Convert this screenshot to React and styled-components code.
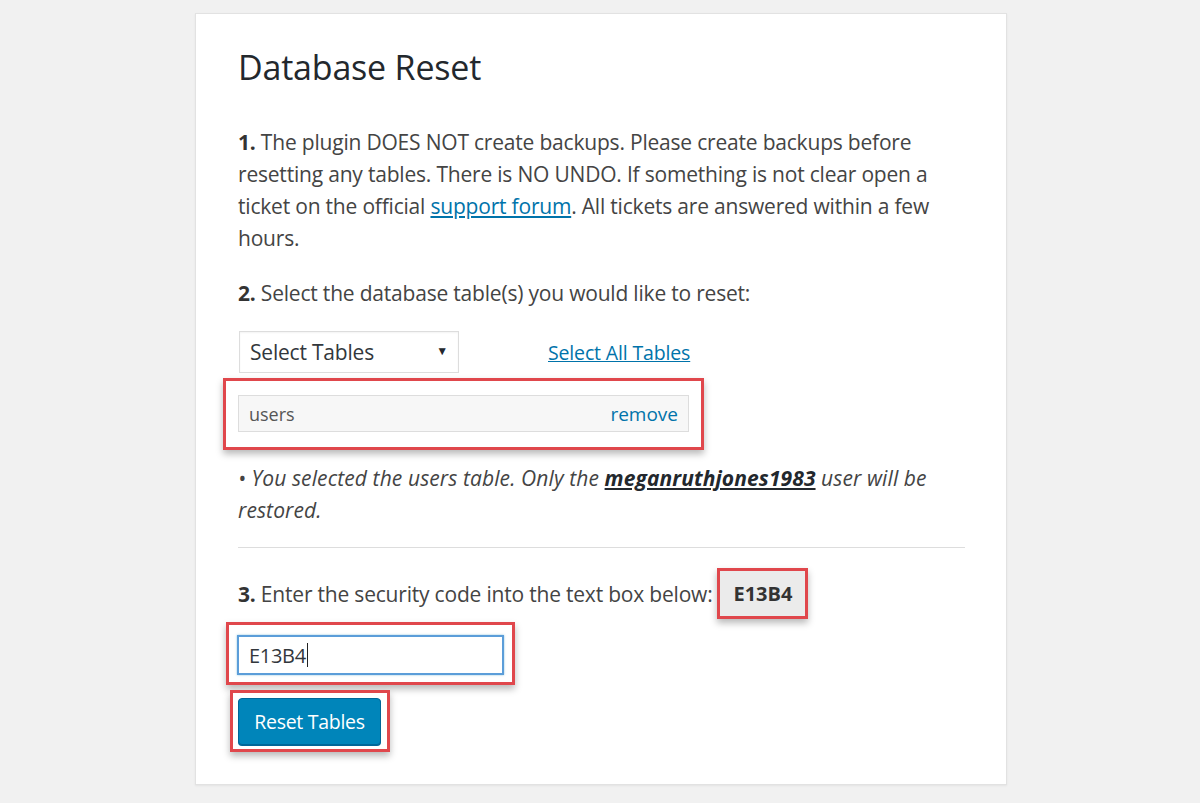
import styled, { createGlobalStyle } from "styled-components";

const GlobalStyle = createGlobalStyle`
  html, body {
    margin: 0;
    padding: 0;
    background: #f1f1f1;
  }
  body {
    font-family: "Open Sans", "Noto Sans", sans-serif;
    color: #444;
  }
`;

const Page = styled.div`
  padding: 13px 0 18px 195px;
`;

const Card = styled.div`
  width: 727px;
  height: 728px;
  background: #fff;
  border: 1px solid #e2e2e2;
  box-shadow: 0 1px 2px rgba(0, 0, 0, 0.06);
  padding: 30px 41px 12px 42px;
`;

const Title = styled.h1`
  margin: 0 0 36px;
  font-size: 34px;
  font-weight: 400;
  line-height: 46px;
  color: #23282d;
  letter-spacing: -0.2px;
`;

const Text = styled.p`
  margin: 0 0 ${(p) => (p.gap === undefined ? 22 : p.gap)}px;
  font-size: 21px;
  line-height: 32px;
  font-style: ${(p) => (p.italic ? "italic" : "normal")};
  letter-spacing: ${(p) => (p.italic ? "0.1px" : "-0.2px")};

  b {
    color: #333;
    font-weight: 700;
  }
`;

const Link = styled.a`
  color: #0073aa;
  text-decoration: underline;
  cursor: pointer;
`;

const User = styled.a`
  color: #23282d;
  font-weight: 700;
  text-decoration: underline;
`;

const SelectRow = styled.div`
  display: flex;
  align-items: center;
  margin-bottom: 5px;
`;

const Select = styled.div`
  width: 198px;
  height: 40px;
  border: 1px solid #ddd;
  box-shadow: inset 0 1px 2px rgba(0, 0, 0, 0.05);
  display: flex;
  align-items: center;
  justify-content: space-between;
  padding: 0 10px;
  margin-left: 1px;
  font-size: 21px;
  color: #32373c;
  letter-spacing: -0.2px;
`;

const Arrow = styled.span`
  font-size: 12px;
  color: #23282d;
  margin-top: -4px;
`;

const SelectAll = styled(Link)`
  margin-left: 89px;
  font-size: 19.5px;
  letter-spacing: -0.15px;
`;

const Highlight = styled.div`
  display: inline-block;
  width: ${(p) => (p.w ? `${p.w}px` : "auto")};
  border: 3px solid #e0474c;
  padding: ${(p) => p.pad || "6px"};
  box-shadow: 0 4px 7px rgba(0, 0, 0, 0.28);
  margin-left: ${(p) => p.left || 0}px;
  background: #fff;
`;

const Chosen = styled.div`
  height: 35px;
  border: 1px solid #ddd;
  background: #f7f7f7;
  display: flex;
  align-items: center;
  justify-content: space-between;
  padding: 0 10px;
  font-size: 18px;
  color: #555;
`;

const Remove = styled.span`
  color: #0073aa;
  font-size: 19px;
`;

const Rule = styled.hr`
  border: 0;
  border-top: 1px solid #ddd;
  margin: 21px 0 20px;
`;

const CodeRow = styled.div`
  display: flex;
  align-items: center;
  margin-bottom: 3px;
  font-size: 21px;
  letter-spacing: -0.2px;

  b {
    color: #333;
  }
`;

const Code = styled.span`
  display: block;
  background: #ebebeb;
  color: #333;
  font-weight: 700;
  font-size: 20px;
  padding: 9px 13px;
  line-height: 27px;
  letter-spacing: 0;
`;

const Input = styled.div`
  width: 253px;
  height: 36px;
  border: 2px solid #5b9dd9;
  box-shadow: 0 0 2px rgba(30, 140, 190, 0.5);
  display: flex;
  align-items: center;
  padding-left: 10px;
  font-size: 20px;
  color: #32373c;
  letter-spacing: -0.3px;
`;

const Caret = styled.span`
  display: inline-block;
  width: 1px;
  height: 24px;
  background: #222;
  margin-left: 1px;
`;

const Button = styled.button`
  width: 143px;
  height: 47px;
  background: #0085ba;
  border: 1px solid #006799;
  border-radius: 4px;
  box-shadow: 0 1px 0 #006799;
  color: #fff;
  font-family: "Open Sans", "Noto Sans", sans-serif;
  font-size: 19.5px;
  letter-spacing: -0.3px;
  cursor: pointer;
`;

const Spacer = styled.div`
  height: ${(p) => p.h}px;
`;

export default function App() {
  return (
    <>
      <GlobalStyle />
      <Page>
        <Card>
          <Title>Database Reset</Title>
          <Text gap={23}>
            <b>1.</b> The plugin DOES NOT create backups. Please create backups
            before resetting any tables. There is NO UNDO. If something is not
            clear open a ticket on the official <Link>support forum</Link>. All
            tickets are answered within a few hours.
          </Text>
          <Text>
            <b>2.</b> Select the database table(s) you would like to reset:
          </Text>
          <SelectRow>
            <Select>
              Select Tables <Arrow>▼</Arrow>
            </Select>
            <SelectAll>Select All Tables</SelectAll>
          </SelectRow>
          <Highlight w={451} left={-15} pad="14px 12px 15px 12px">
            <Chosen>
              users <Remove>remove</Remove>
            </Chosen>
          </Highlight>
          <Spacer h={12} />
          <Text italic gap={0}>
            • You selected the users table. Only the{" "}
            <User>meganruthjones1983</User> user will be restored.
          </Text>
          <Rule />
          <CodeRow>
            <span>
              <b>3.</b> Enter the security code into the text box below:
            </span>
            <Highlight left={5} pad="0">
              <Code>E13B4</Code>
            </Highlight>
          </CodeRow>
          <Highlight left={-12} pad="10px 8px 7px 8px">
            <Input>
              E13B4
              <Caret />
            </Input>
          </Highlight>
          <Spacer h={5} />
          <Highlight left={-8} pad="5px 6px 4px 5px">
            <Button>Reset Tables</Button>
          </Highlight>
        </Card>
      </Page>
    </>
  );
}
